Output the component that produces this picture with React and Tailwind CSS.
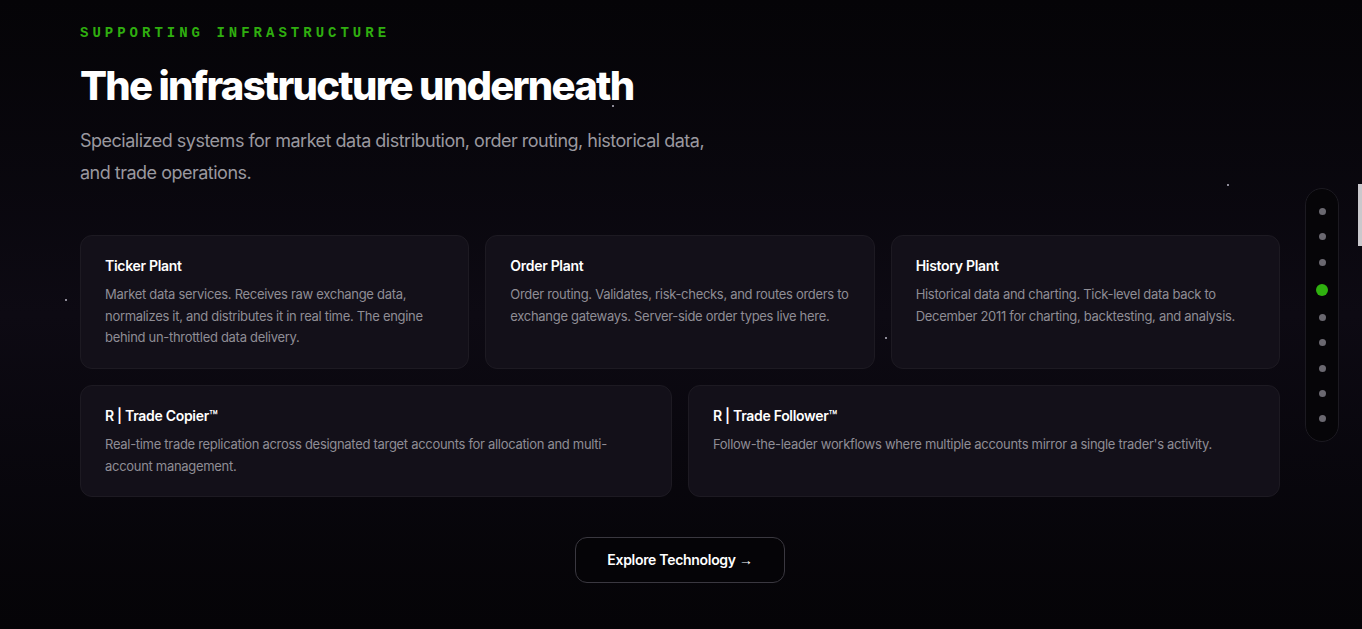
const plants = [
  {
    name: 'Ticker Plant',
    body: 'Market data services. Receives raw exchange data, normalizes it, and distributes it in real time. The engine behind un-throttled data delivery.',
  },
  {
    name: 'Order Plant',
    body: 'Order routing. Validates, risk-checks, and routes orders to exchange gateways. Server-side order types live here.',
  },
  {
    name: 'History Plant',
    body: 'Historical data and charting. Tick-level data back to December 2011 for charting, backtesting, and analysis.',
  },
];

const tools = [
  {
    name: 'R | Trade Copier™',
    body: 'Real-time trade replication across designated target accounts for allocation and multi-account management.',
  },
  {
    name: 'R | Trade Follower™',
    body: "Follow-the-leader workflows where multiple accounts mirror a single trader's activity.",
  },
];

// background star field
const stars = [
  [65, 299], [1227, 184], [885, 337], [408, 454], [1158, 491], [612, 105],
];

const Card = ({ item, className = '' }) => (
  <div className={`rounded-xl border border-[#1d1a22] bg-[#131019] px-6 pt-[20px] pb-6 ${className}`}>
    <h3 className="text-[14px] font-semibold leading-[20px] tracking-[-0.3px] text-white">{item.name}</h3>
    <p className="mt-[8px] text-[13px] leading-[21.5px] tracking-[-0.3px] text-[#8f8d95]">{item.body}</p>
  </div>
);

const SectionNav = () => (
  <div className="fixed right-[23px] top-[188px] flex h-[254px] w-[34px] flex-col items-center justify-between rounded-full border border-[#1c1a21] bg-[#060508] py-[19px]">
    {Array.from({ length: 9 }).map((_, i) =>
      i === 3 ? (
        <span key={i} className="h-3 w-3 rounded-full bg-[#2fb10f]" />
      ) : (
        <span key={i} className="h-[7px] w-[7px] rounded-full bg-[#6a6870]" />
      )
    )}
  </div>
);

export default function App() {
  return (
    <div
      className="relative min-h-[629px] overflow-hidden bg-gradient-to-b from-[#050407] via-[#0d0a13] to-[#050407]"
      style={{ fontFamily: 'Inter, "Noto Sans", sans-serif' }}
    >
      {stars.map(([x, y], i) => (
        <span
          key={i}
          className="absolute h-[2px] w-[2px] rounded-full bg-[#b9b6c4]"
          style={{ left: x, top: y }}
        />
      ))}

      <section className="relative ml-[80px] w-[1200px] pt-[24px] pb-[46px]">
        <p
          className="text-[14px] font-bold uppercase leading-[18px] tracking-[4px] text-[#2fae0f]"
          style={{ fontFamily: '"Liberation Mono", monospace' }}
        >
          Supporting Infrastructure
        </p>
        <h2 className="mt-[20px] text-[40px] font-extrabold leading-[48px] tracking-[-1.7px] text-white">
          The infrastructure underneath
        </h2>
        <p className="mt-[15px] w-[650px] text-[18px] leading-[32px] tracking-[-0.5px] text-[#9a989f]">
          Specialized systems for market data distribution, order routing, historical data, and trade operations.
        </p>

        <div className="mt-[46px] grid grid-cols-3 gap-4">
          {plants.map((p) => (
            <Card key={p.name} item={p} className="h-[134px]" />
          ))}
        </div>
        <div className="mt-4 grid grid-cols-2 gap-4">
          {tools.map((t) => (
            <Card key={t.name} item={t} className="h-[112px]" />
          ))}
        </div>

        <div className="mt-[40px] flex justify-center">
          <button className="h-[46px] w-[210px] rounded-xl border border-[#3a3840] bg-[#050407] text-[14px] font-semibold tracking-[-0.3px] text-white">
            Explore Technology{' '}
            <span style={{ fontFamily: '"Liberation Sans", sans-serif' }}>→</span>
          </button>
        </div>
      </section>

      <SectionNav />
      <div className="fixed right-0 top-[184px] h-[62px] w-[4px] bg-[#c9c8cc]" />
    </div>
  );
}
